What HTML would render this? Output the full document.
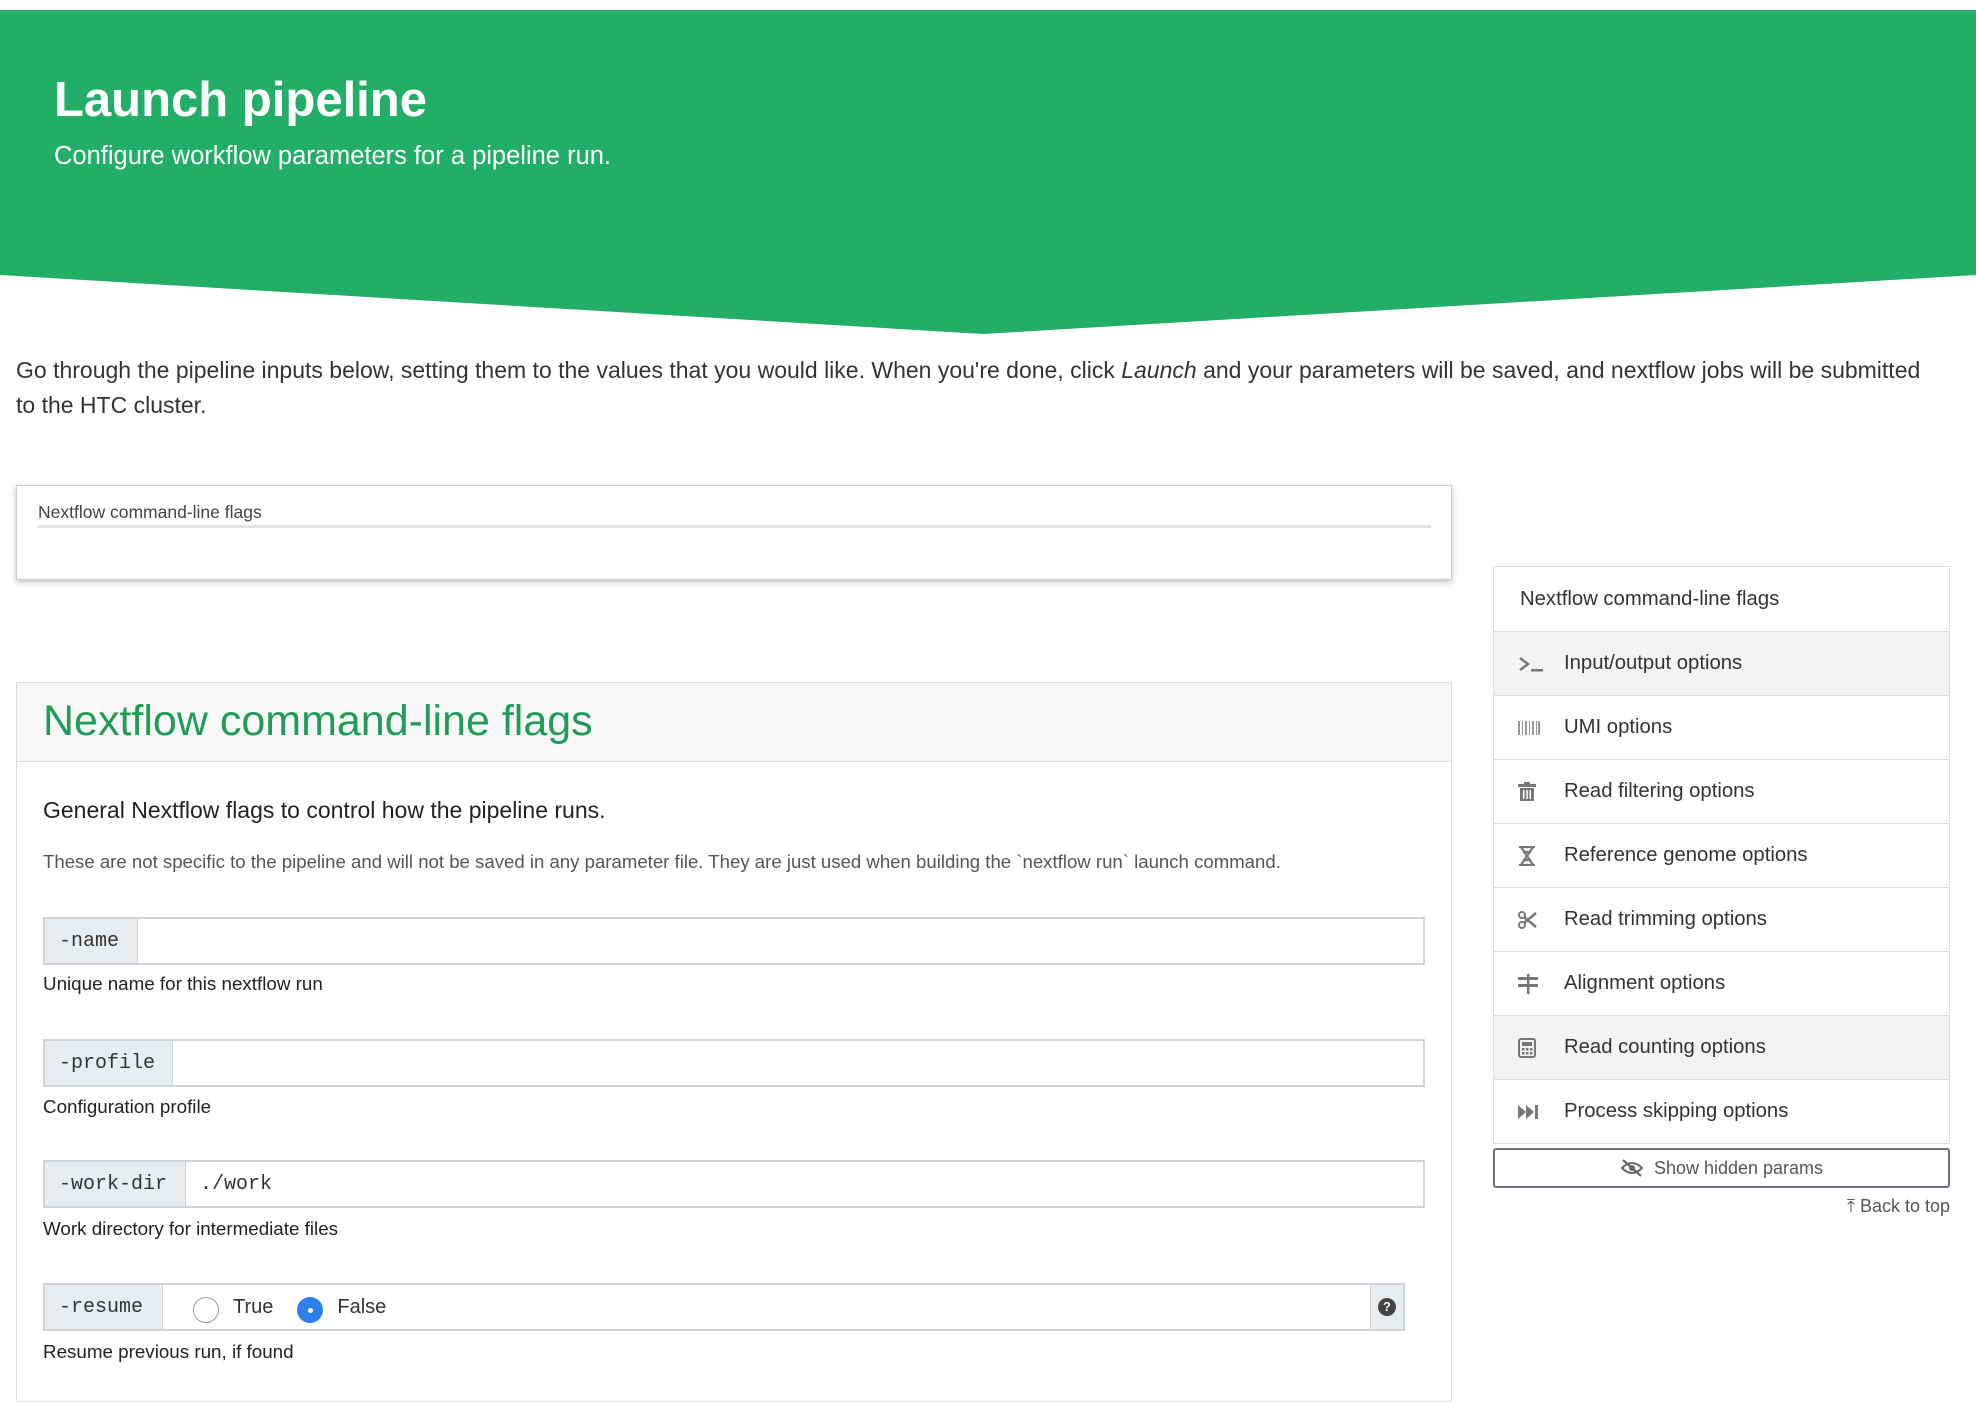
<!DOCTYPE html>
<html><head><meta charset="utf-8"><style>
*{box-sizing:border-box;margin:0;padding:0}
body{width:1976px;height:1380px;overflow:hidden;background:#fff;font-family:"Liberation Sans",sans-serif;color:#212529;position:relative}
.abs{position:absolute}
.banner{left:0;top:10px;width:1976px;height:325px}
.sub{left:54px;top:142px;font-size:25.5px;color:#fff}
.intro{left:16px;top:353px;width:1925px;font-size:23px;line-height:35px;color:#333}
.card1{left:16px;top:485px;width:1436px;height:95px;border:1px solid #ccc;box-shadow:0 2px 6px rgba(0,0,0,.25);background:#fff}
.card1 .lbl{position:absolute;left:21px;top:16px;font-size:17.5px;color:#444}
.card1 .ln{position:absolute;left:21px;right:20px;top:39px;height:3px;background:#e3e3e3}
.card2{left:16px;top:682px;width:1436px;height:720px;border:1px solid #ddd;background:#fff}
.card2 .hd{height:79px;background:#f7f7f7;border-bottom:1px solid #ddd;padding:14px 26px;font-size:43px;color:#1f9d55}
.gen{left:43px;top:797px;font-size:23px;color:#222}
.small{left:43px;top:851px;font-size:18.6px;color:#555}
.ig{left:43px;width:1382px;height:48px;border:2px solid #d0d4da;display:flex;background:#fff}
.ig .ad{background:#e9ecef;border-right:1px solid #d0d4da;font-family:"Liberation Mono",monospace;font-size:20px;padding:0 14px;display:flex;align-items:center;color:#333}
.ig .v{font-family:"Liberation Mono",monospace;font-size:20px;padding:0 14px;display:flex;align-items:center;color:#333}
.help{left:43px;font-size:18.8px;color:#222}
.radio{width:26px;height:26px;border-radius:50%;border:1px solid #999;display:inline-block;vertical-align:middle}
.side{left:1493px;top:566px;width:457px;border:1px solid #ddd;background:#fff}
.side div{height:64px;border-top:1px solid #ddd;display:flex;align-items:center;font-size:20.3px;color:#333}
.side div:first-child{border-top:none;padding-left:26px}
.side .act{background:#f3f3f3}
.side .ic{width:46px;margin-left:24px;color:#777;display:flex;align-items:center}
.btn{left:1493px;top:1148px;width:457px;height:40px;border:2px solid #6c757d;border-radius:3px;display:flex;align-items:center;justify-content:center;font-size:18px;color:#555}
.btt{left:1800px;width:150px;text-align:right;top:1196px;font-size:18px;color:#555}
</style></head><body>
<svg class="abs banner" viewBox="0 0 1976 325" preserveAspectRatio="none"><polygon points="0,0 1976,0 1976,265 983,324 0,265" fill="#22ae66"/></svg>
<div class="abs" style="left:54px;top:72px;font-size:49px;font-weight:bold;color:#fff">Launch pipeline</div>
<div class="abs sub">Configure workflow parameters for a pipeline run.</div>
<div class="abs intro">Go through the pipeline inputs below, setting them to the values that you would like. When you're done, click <i>Launch</i> and your parameters will be saved, and nextflow jobs will be submitted to the HTC cluster.</div>
<div class="abs card1"><div class="lbl">Nextflow command-line flags</div><div class="ln"></div></div>
<div class="abs card2"><div class="hd">Nextflow command-line flags</div></div>
<div class="abs gen">General Nextflow flags to control how the pipeline runs.</div>
<div class="abs small">These are not specific to the pipeline and will not be saved in any parameter file. They are just used when building the `nextflow run` launch command.</div>
<div class="abs ig" style="top:917px"><div class="ad" style="width:93px">-name</div></div>
<div class="abs help" style="top:973px">Unique name for this nextflow run</div>
<div class="abs ig" style="top:1039px"><div class="ad" style="width:128px">-profile</div></div>
<div class="abs help" style="top:1096px">Configuration profile</div>
<div class="abs ig" style="top:1160px"><div class="ad" style="width:141px">-work-dir</div><div class="v">./work</div></div>
<div class="abs help" style="top:1218px">Work directory for intermediate files</div>
<div class="abs ig" style="top:1283px;width:1362px"><div class="ad" style="width:118px">-resume</div>
<div style="flex:1;display:flex;align-items:center;padding-left:30px;font-size:20px;color:#333"><span class="radio" style="margin-top:6px"></span><span style="margin:0 24px 0 14px">True</span><span class="radio" style="background:#2f80ed;border-color:#2f80ed;position:relative;margin-top:6px"><span style="position:absolute;left:10px;top:10px;width:5px;height:5px;background:#fff;border-radius:50%"></span></span><span style="margin-left:14px">False</span></div>
<div style="width:33px;background:#e9ecef;border-left:1px solid #d0d4da;display:flex;align-items:center;justify-content:center"><span style="width:18px;height:18px;border-radius:50%;background:#444;color:#fff;font-size:13px;font-weight:bold;text-align:center;line-height:18px">?</span></div></div>
<div class="abs help" style="top:1341px">Resume previous run, if found</div>
<div class="abs side">
<div>Nextflow command-line flags</div>
<div class="act"><span class="ic"><svg width="26" height="18"><path d="M2 3l8 6-8 6" stroke="#777" stroke-width="2.5" fill="none"/><rect x="13" y="14" width="12" height="2.5" fill="#777"/></svg></span>Input/output options</div>
<div><span class="ic"><svg width="22" height="14"><g fill="#999"><rect x="0" width="2" height="14"/><rect x="4" width="1" height="14"/><rect x="7" width="2" height="14"/><rect x="11" width="1" height="14"/><rect x="14" width="2" height="14"/><rect x="18" width="1" height="14"/><rect x="20" width="2" height="14"/></g></svg></span>UMI options</div>
<div><span class="ic"><svg width="18" height="20"><rect x="0" y="2" width="18" height="3" fill="#777"/><rect x="6" y="0" width="6" height="3" fill="#777"/><rect x="2" y="6" width="14" height="13" fill="#777"/><g fill="#fff"><rect x="5" y="8" width="1.5" height="9"/><rect x="8.3" y="8" width="1.5" height="9"/><rect x="11.5" y="8" width="1.5" height="9"/></g></svg></span>Read filtering options</div>
<div><span class="ic"><svg width="18" height="20"><path d="M1 1h16M1 19h16M3 1l12 18M15 1L3 19M5 6h8M5 14h8" stroke="#777" stroke-width="2.2" fill="none"/></svg></span>Reference genome options</div>
<div><span class="ic"><svg width="20" height="18"><circle cx="4" cy="4" r="3" stroke="#777" stroke-width="2" fill="none"/><circle cx="4" cy="14" r="3" stroke="#777" stroke-width="2" fill="none"/><path d="M6 6l12 10M6 12L18 2" stroke="#777" stroke-width="2.5"/></svg></span>Read trimming options</div>
<div><span class="ic"><svg width="20" height="20"><rect x="0" y="3" width="20" height="3" fill="#777"/><rect x="0" y="10" width="20" height="3" fill="#777"/><rect x="9" y="0" width="2.5" height="20" fill="#777"/></svg></span>Alignment options</div>
<div class="act"><span class="ic"><svg width="18" height="20"><rect x="1" y="1" width="16" height="18" rx="2" stroke="#777" stroke-width="2" fill="none"/><rect x="4" y="4" width="10" height="4" fill="#777"/><g fill="#777"><rect x="4" y="10" width="2.5" height="2.5"/><rect x="8" y="10" width="2.5" height="2.5"/><rect x="12" y="10" width="2.5" height="2.5"/><rect x="4" y="14" width="2.5" height="2.5"/><rect x="8" y="14" width="2.5" height="2.5"/><rect x="12" y="14" width="2.5" height="2.5"/></g></svg></span>Read counting options</div>
<div><span class="ic"><svg width="22" height="16"><path d="M0 1l8 7-8 7zM8 1l8 7-8 7z" fill="#777"/><rect x="17" y="1" width="3" height="14" fill="#777"/></svg></span>Process skipping options</div>
</div>
<div class="abs btn"><svg width="24" height="18" style="margin-right:10px"><path d="M2 9q10-10 20 0q-10 10-20 0z" stroke="#666" stroke-width="2" fill="none"/><circle cx="12" cy="9" r="3" fill="#666"/><path d="M3 1l18 16" stroke="#666" stroke-width="2.2"/></svg>Show hidden params</div>
<div class="abs btt">⤒ Back to top</div>
</body></html>
